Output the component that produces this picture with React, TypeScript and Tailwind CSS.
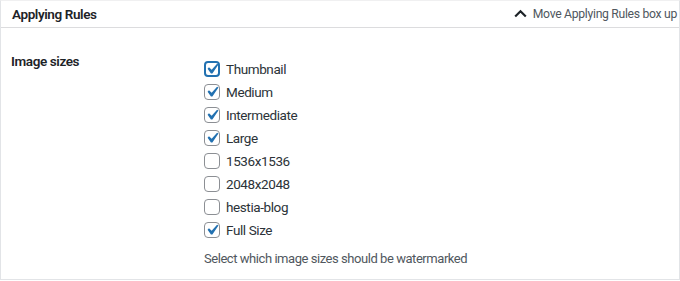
import React from "react";

const items: [string, boolean][] = [
  ["Thumbnail", true],
  ["Medium", true],
  ["Intermediate", true],
  ["Large", true],
  ["1536x1536", false],
  ["2048x2048", false],
  ["hestia-blog", false],
  ["Full Size", true],
];

function Box({ checked, focus }: { checked: boolean; focus?: boolean }) {
  return (
    <span
      className={
        "relative flex h-4 w-4 shrink-0 items-center justify-center rounded-[4px] bg-white " +
        (focus ? "border-2 border-[#2271b1]" : "border border-[#8c8f94]")
      }
    >
      {checked && (
        <svg width="21" height="21" viewBox="0 0 20 20" className="absolute left-1/2 top-1/2 -translate-x-1/2 -translate-y-1/2">
          <path
            d="M14.83 4.89l1.34.94-5.81 8.38H9.02L5.78 9.67l1.34-1.25 2.57 2.4z"
            fill="#2271b1"
          />
        </svg>
      )}
    </span>
  );
}

export default function App() {
  return (
    <div
      className="h-[281px] w-[680px] bg-white text-[13px] tracking-[-0.4px] text-[#3c434a]"
      style={{ fontFamily: "Roboto, 'Liberation Sans', sans-serif" }}
    >
      <div className="flex h-[280px] flex-col border border-[#e2e4e7] border-t-[#f0f0f1]">
        <div className="flex h-[27px] items-center justify-between border-b border-[#dcdcde] pl-[11px] pr-[2px]">
          <span className="text-[13.5px] font-semibold text-[#1d2327]">Applying Rules</span>
          <span className="flex items-center gap-[6px] text-[12.2px] tracking-[-0.3px] text-[#50575e]">
            <svg width="13" height="9" viewBox="0 0 13 9">
              <path d="M1.2 7.5 L6.5 2.2 L11.8 7.5" stroke="#1d2327" strokeWidth="2.2" fill="none" />
            </svg>
            Move Applying Rules box up
          </span>
        </div>
        <div className="flex pl-[10px] pt-[22px]">
          <div className="w-[193px] text-[13.5px] font-semibold leading-[22px] text-[#1d2327]">Image sizes</div>
          <div className="flex flex-col pt-[8px]">
            {items.map(([label, checked], i) => (
              <label key={label} className="flex h-[22.9px] items-center gap-[6px] text-[13.5px] text-[#2c3338]">
                <Box checked={checked} focus={i === 0} />
                <span>{label}</span>
              </label>
            ))}
            <p className="mt-[8px] text-[13px] tracking-[-0.45px] text-[#50575e]">Select which image sizes should be watermarked</p>
          </div>
        </div>
      </div>
    </div>
  );
}
